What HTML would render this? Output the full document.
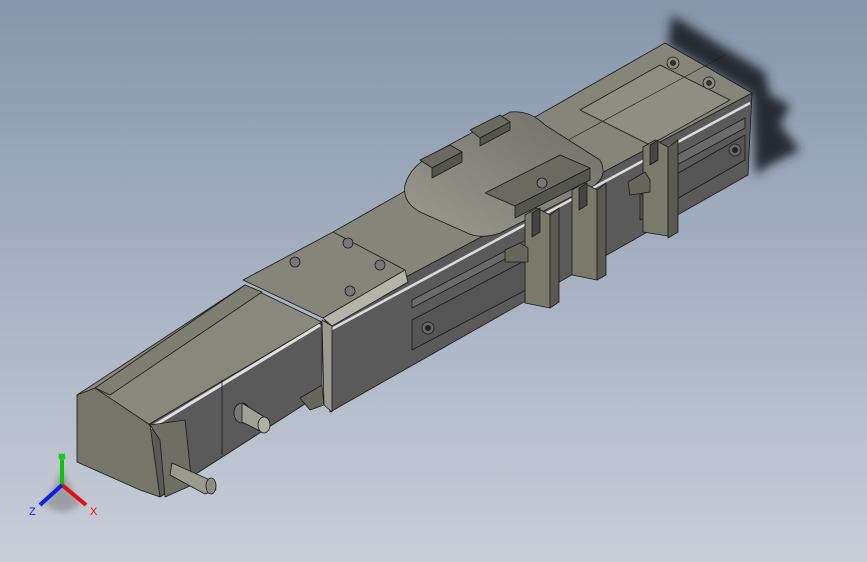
<!DOCTYPE html>
<html><head><meta charset="utf-8"><style>
html,body{margin:0;padding:0;width:867px;height:562px;overflow:hidden}
svg{display:block}
text{font-family:"Liberation Sans",sans-serif}
</style></head><body>
<svg width="867" height="562" viewBox="0 0 867 562" xmlns="http://www.w3.org/2000/svg">
<defs>
<linearGradient id="bg" x1="0" y1="0" x2="0" y2="1">
<stop offset="0" stop-color="#8796ac"/><stop offset="1" stop-color="#c9cdd8"/></linearGradient>
<linearGradient id="plate" x1="0" y1="1" x2="1" y2="0">
<stop offset="0" stop-color="#9a9a90"/><stop offset="1" stop-color="#6e6e68"/></linearGradient>
<filter id="blur"><feGaussianBlur stdDeviation="5"/></filter>
<filter id="b2"><feGaussianBlur stdDeviation="3"/></filter>
</defs>
<rect width="867" height="562" fill="url(#bg)"/>
<path d="M672,15 L720,45 L765,72 L770,95 L790,105 L780,125 L800,150 L770,165 L755,175 L752,95 L668,45 Z" fill="#262a30" filter="url(#blur)"/>
<g stroke="#1a1a1a" stroke-width="0.8" stroke-linejoin="round">
<polygon points="325,320 752,93 748,175 330,412" fill="#5a5a5a"/>
<polygon points="333,232 665,43 752,93 325,320" fill="#858579"/>
<polygon points="580,110 660,65 730,100 650,145" fill="#8e8e84"/>
<line x1="430" y1="215" x2="725" y2="55" stroke-width="0.6"/>
<polygon points="412,300 545,230 545,238 412,308" fill="#6a6a6a"/>
<polygon points="412,320 545,250 545,280 412,350" fill="#555"/>
<polygon points="640,175 745,118 745,128 640,185" fill="#6a6a6a"/>
<polygon points="640,195 745,135 745,160 640,220" fill="#555"/>
<circle cx="428" cy="328" r="6" fill="#666"/><circle cx="428" cy="328" r="2.5" fill="#222"/>
<circle cx="735" cy="150" r="6" fill="#666"/><circle cx="735" cy="150" r="2.5" fill="#222"/>
<line x1="330" y1="330" x2="750" y2="103" stroke="#ddd" stroke-width="2.5"/>
<circle cx="673" cy="63" r="6" fill="#8a8a80"/><circle cx="673" cy="63" r="2.5" fill="#333"/>
<circle cx="709" cy="83" r="6" fill="#8a8a80"/><circle cx="709" cy="83" r="2.5" fill="#333"/>
<path d="M405,185 Q410,165 440,150 L510,112 Q530,110 545,125 L600,160 Q608,175 595,185 L500,233 Q480,240 465,232 L420,212 Q402,202 405,185 Z" fill="url(#plate)"/>
<polygon points="420,160 450,145 462,152 432,168" fill="#6a6a60"/>
<polygon points="432,168 462,152 462,162 432,178" fill="#555550"/>
<polygon points="470,130 500,115 510,122 480,138" fill="#6a6a60"/>
<polygon points="480,138 510,122 510,130 480,146" fill="#555550"/>
<polygon points="485,193 560,155 590,168 515,206" fill="#6a6a60"/>
<polygon points="515,206 590,168 590,180 515,218" fill="#555550"/>
<circle cx="542" cy="183" r="5" fill="#777"/>
<polygon points="643,147 655,140 668,147 668,236 643,232" fill="#7a7a6c"/>
<polygon points="668,147 678,140 678,232 668,238" fill="#5a5a52"/>
<polygon points="650,145 658,140 658,160 650,165" fill="#444"/>
<polygon points="572,190 584,183 597,190 597,280 572,275" fill="#7a7a6c"/>
<polygon points="597,190 606,183 606,275 597,280" fill="#5a5a52"/>
<polygon points="579,188 587,183 587,205 579,210" fill="#444"/>
<polygon points="525,215 537,208 550,215 550,308 525,303" fill="#7a7a6c"/>
<polygon points="550,215 559,208 559,302 550,308" fill="#5a5a52"/>
<polygon points="532,213 540,208 540,232 532,237" fill="#444"/>
<polygon points="505,250 520,243 528,248 528,262 505,262" fill="#66665c"/>
<polygon points="628,182 645,172 650,180 650,192 630,195" fill="#66665c"/>
<!-- middle clamp block -->
<polygon points="243,280 333,232 405,270 323,318" fill="#858579"/>
<polygon points="323,318 405,270 408,282 332,326" fill="#b4b4aa"/>
<circle cx="295" cy="262" r="5" fill="#777"/><circle cx="348" cy="243" r="5" fill="#777"/>
<circle cx="380" cy="265" r="5" fill="#777"/><circle cx="350" cy="291" r="5" fill="#777"/>
<!-- motor top -->
<polygon points="77,395 245,285 322,322 148,425" fill="#88887c"/>
<polygon points="95,388 245,285 262,292 110,395" fill="#7e7e72"/>
<!-- motor front -->
<polygon points="148,425 322,322 322,393 160,497" fill="#5a5a5a"/>
<line x1="150" y1="428" x2="320" y2="325" stroke="#e0e0e0" stroke-width="3"/>
<line x1="222" y1="380" x2="222" y2="455"/>
<!-- block front edge -->
<polygon points="322,320 332,326 332,412 324,405" fill="#9a9a90"/>
<polygon points="300,398 322,385 324,405 310,410" fill="#66665e"/>
<!-- motor end face -->
<polygon points="77,395 95,388 150,425 160,497 140,490 77,462" fill="#75756a"/>
<polygon points="150,425 185,420 192,485 165,497 160,440" fill="#6e6e64"/>
<polygon points="172,463 210,480 216,490 205,494 170,475" fill="#9a9a8e"/>
<ellipse cx="211" cy="486" rx="5" ry="8" fill="#8c8c82"/>
<ellipse cx="242" cy="413" rx="8" ry="10" fill="#777"/>
<polygon points="242,403 266,418 262,432 242,422" fill="#a0a096"/>
<ellipse cx="264" cy="425" rx="6" ry="8" fill="#b0b0a4"/>
</g>
<path d="M62,470 L45,505 Q62,518 80,505 Z" fill="#777" opacity="0.5" filter="url(#b2)"/>
<line x1="62" y1="485" x2="62" y2="458" stroke="#10c010" stroke-width="4"/>
<circle cx="62" cy="457" r="3.5" fill="#20d020"/>
<line x1="62" y1="485" x2="86" y2="505" stroke="#e01010" stroke-width="4"/>
<line x1="62" y1="485" x2="40" y2="505" stroke="#1020e0" stroke-width="4"/>
<text x="58" y="461" font-size="11" fill="#10c010">Y</text>
<text x="90" y="515" font-size="11" fill="#e01010">X</text>
<text x="29" y="515" font-size="11" fill="#1020e0">Z</text>
</svg>
</body></html>
